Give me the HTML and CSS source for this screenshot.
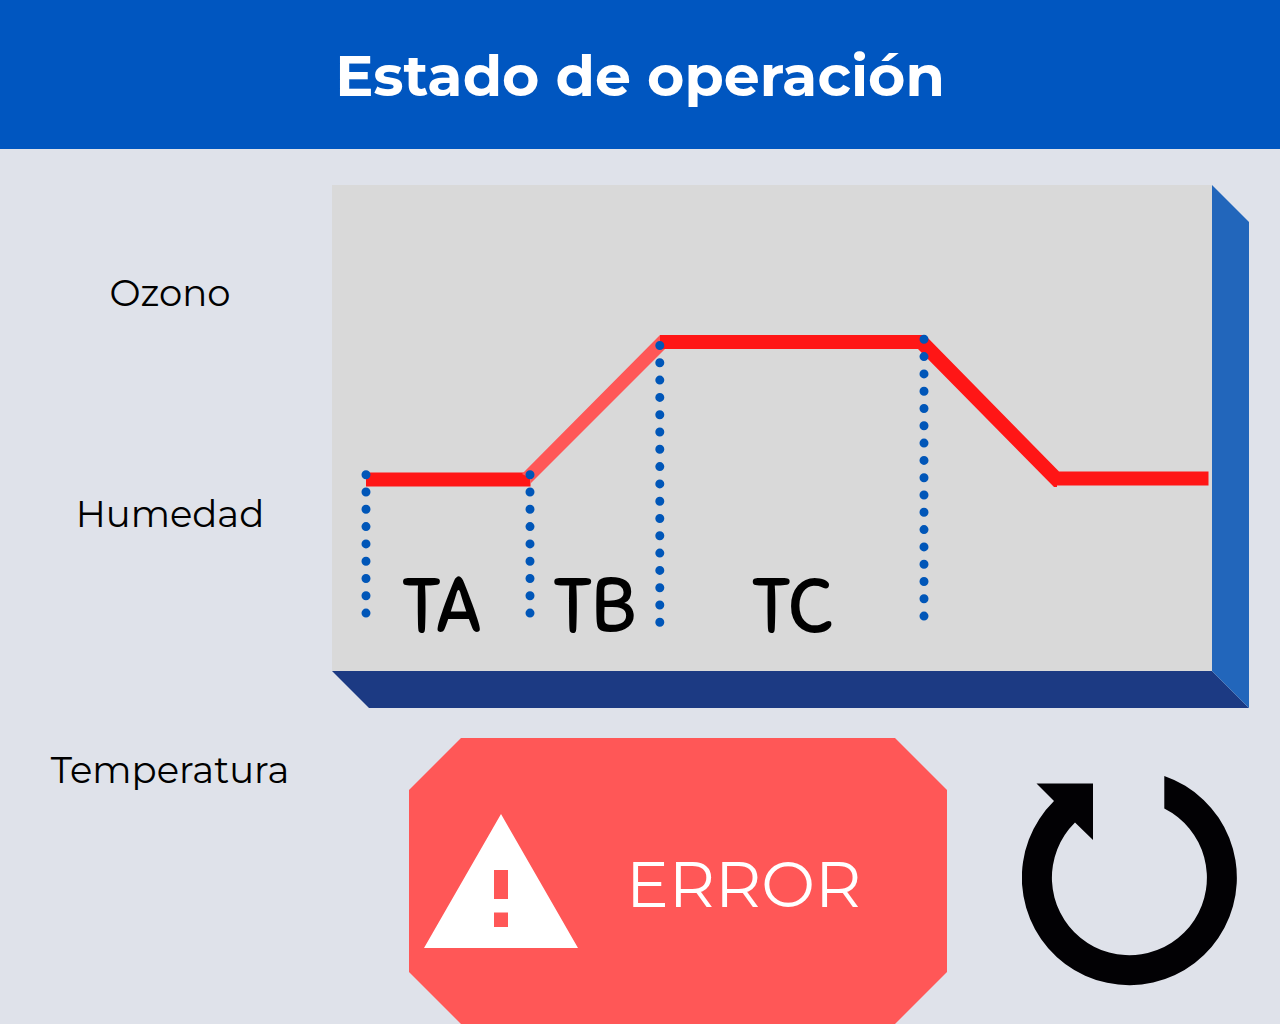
FILE: index.html
```html
<!DOCTYPE html>
<html lang="es">
<head>
<meta charset="utf-8">
<meta name="viewport" content="width=device-width, initial-scale=1">
<title>Estado de operación</title>
<link rel="stylesheet" href="styles.css">
</head>
<body>
<header class="header">
  <h1 class="title">Estado de operación</h1>
</header>
<main class="panel">
  <div class="labels labels-chart">
    <p class="label">Ozono</p>
    <p class="label">Humedad</p>
  </div>
  <svg class="chart" viewBox="0 0 917 523" role="img" aria-label="Ciclo de operación: TA, TB, TC">
    <path fill="#d9d9d9" d="M0 0H880V486H0z"/>
    <path fill="#1c3a83" d="M0 486H880L917 523H37z"/>
    <path fill="#2266bb" d="M880 0L917 37V523L880 486z"/>
    <g fill="#ff1616">
      <path d="M34 287.5H198.5V301.5H34z"/>
      <path fill="#ff5757" d="M190 289L328 150L333 164L198.500 298.500V293z"/>
      <path d="M328 150H593L727 286.500H876.500V300.500H725V302H722L586 164H328z"/>
    </g>
    <g class="marks">
      <path d="M34 289.700V429"/>
      <path d="M198 289.700V429"/>
      <path d="M327.800 160.500V438"/>
      <path d="M592 154.300V432"/>
    </g>
    <g class="phases">
      <text x="109" y="447">TA</text>
      <text x="262" y="447">TB</text>
      <text x="460" y="447">TC</text>
    </g>
  </svg>
  <div class="labels">
    <p class="label">Temperatura</p>
  </div>
  <div class="actions">
    <div class="alert" role="alert">
      <svg class="warning" viewBox="0 0 154 134" aria-hidden="true">
        <path fill="#fff" fill-rule="evenodd" d="M77 0L154 134H0zM70 56V85H84V56zM70 98.500V113H84V98.500z"/>
      </svg>
      <span class="alert-text">ERROR</span>
    </div>
    <button class="restart" type="button" aria-label="Reiniciar">
      <svg class="restart-icon" viewBox="0 0 215 210" aria-hidden="true">
        <path fill="#020104" d="M142.300 0A107.500 107.500 0 1 1 32 25L14.500 7.500H71V64L53 46.500A77.500 77.500 0 1 0 142.300 32.500z"/>
      </svg>
    </button>
  </div>
</main>
</body>
</html>
```
FILE: styles.css
```css
* {
  box-sizing: border-box;
}

body {
  margin: 0;
  background: #dfe2ea;
  color: #000;
  font-family: Montserrat, Inter, sans-serif;
}

.header {
  padding: 40px 24px 37px;
  background: #0056c0;
  color: #fff;
  text-align: center;
}

.title {
  margin: 0;
  font-size: 57px;
  line-height: 72px;
  font-weight: 700;
}

.panel {
  display: grid;
  grid-template-columns: 332px 1fr;
  row-gap: 30px;
  padding: 36px 31px 0 0;
}

.labels {
  display: flex;
  flex-direction: column;
  align-items: center;
  padding: 8px 0 0 8px;
}

.labels-chart {
  gap: 173px;
  padding-top: 84px;
}

.label {
  margin: 0;
  font-size: 37px;
  line-height: 48px;
  font-weight: 400;
}

.chart {
  display: block;
  width: 100%;
}

.marks {
  fill: none;
  stroke: #0056b8;
  stroke-width: 9;
  stroke-linecap: round;
  stroke-dasharray: 0 17.3;
}

.phases {
  font-family: Sniglet, "Baloo 2", Inter, sans-serif;
  font-size: 76px;
  font-weight: 400;
  text-anchor: middle;
}

.actions {
  display: flex;
  align-items: flex-start;
  gap: 75px;
  padding: 0 12px 0 77px;
}

.alert {
  flex: 1;
  display: flex;
  align-items: center;
  gap: 48px;
  height: 286px;
  padding: 6px 15px 0;
  background: #ff5757;
  color: #fff;
  clip-path: polygon(52px 0, calc(100% - 52px) 0, 100% 52px, 100% calc(100% - 52px), calc(100% - 52px) 100%, 52px 100%, 0 calc(100% - 52px), 0 52px);
}

.warning {
  width: 154px;
  margin-bottom: 6px;
}

.alert-text {
  font-size: 64px;
  line-height: 72px;
  font-weight: 400;
}

.restart {
  margin-top: 38px;
  padding: 0;
  border: 0;
  background: none;
  cursor: pointer;
}

.restart-icon {
  display: block;
  width: 215px;
}
```
